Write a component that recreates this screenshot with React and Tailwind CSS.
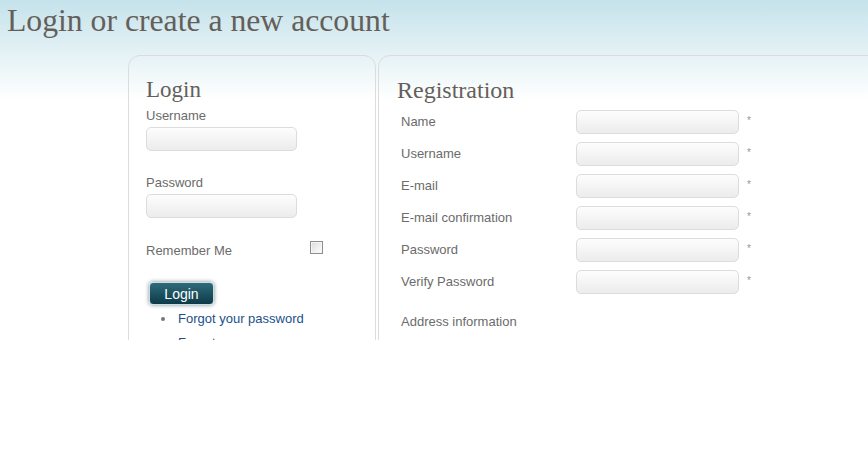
import React from "react";

const serif = { fontFamily: '"Liberation Serif", "Times New Roman", serif' };

function Input({ w = "w-[151px]" }) {
  return (
    <div className={`${w} h-[24px] rounded-[5px] border border-[#dcdcdc] bg-[linear-gradient(#fdfdfd,#ececec)]`} />
  );
}

const regRows = ["Name", "Username", "E-mail", "E-mail confirmation", "Password", "Verify Password"];

export default function App() {
  return (
    <div className="w-[868px] h-[460px] bg-white" style={{ fontFamily: '"Liberation Sans", Arial, sans-serif' }}>
      <div className="h-[340px] overflow-hidden bg-[linear-gradient(#c5e2eb,#ffffff_100px)]">
        <h1 className="pl-[7px] pt-[3px] h-[55px] text-[31.7px] leading-[36px] text-[#655f5a]" style={serif}>
          Login or create a new account
        </h1>
        <div className="flex pl-[128px] gap-[2px]">
          <div className="w-[248px] shrink-0 h-[300px] border border-[#dcdcdc] rounded-t-[12px] pl-[17px] pt-[20px]">
            <h2 className="text-[23px] leading-[28px] text-[#655f5a]" style={serif}>Login</h2>
            <div className="text-[13px] leading-[16px] text-[#6b6b6b] mt-[4px]">Username</div>
            <div className="mt-[3px]"><Input /></div>
            <div className="text-[13px] leading-[16px] text-[#6b6b6b] mt-[24px]">Password</div>
            <div className="mt-[3px]"><Input /></div>
            <div className="flex items-start mt-[23px]">
              <div className="text-[13px] leading-[16px] text-[#6b6b6b] mt-[2px] w-[164px]">Remember Me</div>
              <div className="w-[13px] h-[13px] border border-[#8f8f8f] bg-[linear-gradient(135deg,#dcdcdc,#ffffff)] shadow-[inset_0_0_0_1px_#f4f4f4]" />
            </div>
            <button className="mt-[23px] ml-[3px] w-[65px] h-[23px] rounded-[4px] border border-[#c9dde3] bg-[linear-gradient(#2f6b7b,#0d3a48)] text-white text-[14px] leading-[20px] shadow-[0_0_4px_#7f8f95]">
              Login
            </button>
            <ul className="mt-[1px] ml-[15px] text-[13px] leading-[24px] text-[#1b4f89]">
              <li className="flex items-center"><span className="w-[4px] h-[4px] rounded-full bg-[#777] mr-[13px]" />Forgot your password</li>
              <li className="flex items-center"><span className="w-[4px] h-[4px] rounded-full bg-[#777] mr-[13px]" />Forgot your username</li>
            </ul>
          </div>
          <div className="w-[520px] shrink-0 h-[300px] border border-[#dcdcdc] rounded-t-[12px] pl-[18px] pt-[20px]">
            <h2 className="text-[24px] leading-[28px] text-[#655f5a]" style={serif}>Registration</h2>
            <div className="mt-[6px] flex flex-col gap-[8px]">
              {regRows.map((r) => (
                <div key={r} className="flex items-center h-[24px]">
                  <div className="w-[179px] pl-[4px] text-[13px] text-[#6b6b6b]">{r}</div>
                  <Input w="w-[163px]" />
                  <span className="ml-[8px] text-[10px] text-[#8a9aa5] -mt-[3px]">*</span>
                </div>
              ))}
            </div>
            <div className="mt-[20px] pl-[4px] text-[13px] leading-[16px] text-[#6b6b6b]">Address information</div>
          </div>
        </div>
      </div>
    </div>
  );
}
